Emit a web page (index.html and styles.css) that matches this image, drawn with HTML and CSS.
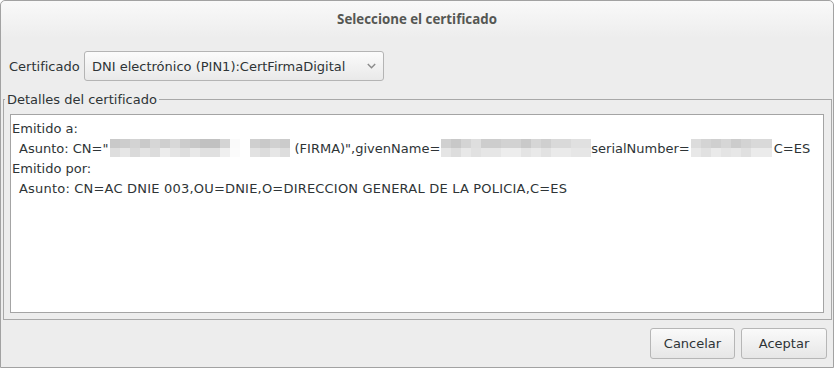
FILE: index.html
```html
<!DOCTYPE html>
<html lang="es">
<head>
    <meta charset="utf-8">
    <title>Seleccione el certificado</title>
    <link rel="stylesheet" href="styles.css">
</head>
<body>
    <div class="window">
        <div class="titlebar">Seleccione el certificado</div>

        <div class="cert-row">
            <label class="cert-label">Certificado</label>
            <div class="combo">
                <span>DNI electrónico (PIN1):CertFirmaDigital</span>
                <svg class="chevron" width="9" height="6" viewBox="0 0 9 6">
                    <path d="M0.8 1 L4.5 4.7 L8.2 1" fill="none" stroke="#8a8a8a" stroke-width="1.4"/>
                </svg>
            </div>
        </div>

        <fieldset class="details">
            <legend>Detalles del certificado</legend>
            <div class="details-box">
                <div class="line">Emitido a:</div>
                <div class="line indent">Asunto: CN="<span class="blur blur-name"></span><span class="blur blur-surname"></span> (FIRMA)",givenName=<span class="blur blur-given"></span>serialNumber=<span class="blur blur-serial"></span>C=ES</div>
                <div class="line">Emitido por:</div>
                <div class="line indent issuer">Asunto: CN=AC DNIE 003,OU=DNIE,O=DIRECCION GENERAL DE LA POLICIA,C=ES</div>
            </div>
        </fieldset>

        <div class="actions">
            <button class="btn btn-cancel">Cancelar</button>
            <button class="btn btn-ok">Aceptar</button>
        </div>
    </div>
</body>
</html>
```

FILE: styles.css
```css
body {
    margin: 0;
    font-family: "DejaVu Sans", sans-serif;
    font-size: 13px;
    color: #2e3436;
}
.window {
    width: 834px;
    height: 368px;
    box-sizing: border-box;
    border: 1px solid #a2a2a2;
    border-radius: 5px 5px 0 0;
    background: #ededed;
    display: flex;
    flex-direction: column;
}
.titlebar {
    height: 37px;
    line-height: 36px;
    text-align: center;
    font-family: "Open Sans", "Noto Sans", sans-serif;
    font-size: 13.3px;
    font-weight: bold;
    color: #555753;
    background: linear-gradient(#f9f9f9, #ededed);
    border-radius: 5px 5px 0 0;
}
.cert-row {
    display: flex;
    align-items: center;
    padding: 13px 0 0 8px;
}
.cert-label {
    width: 75px;
}
.combo {
    width: 300px;
    height: 30px;
    box-sizing: border-box;
    border: 1px solid #b4b4b4;
    border-radius: 3px;
    background: linear-gradient(#fbfbfb, #e9e9e9);
    display: flex;
    align-items: center;
    justify-content: space-between;
    padding: 0 7px;
}
.details {
    margin: 11px 1px 0 2px;
    padding: 7px 7px 6px 6px;
    border: 1px solid #a8a8a8;
}
.details legend {
    padding: 0 2px;
    margin-left: -5px;
    line-height: 15px;
}
.details-box {
    height: 199px;
    box-sizing: border-box;
    background: #fff;
    border: 1px solid #a4a4a4;
    padding: 4px 0 0 1px;
}
.line {
    height: 20px;
    line-height: 20px;
    white-space: nowrap;
}
.indent {
    padding-left: 7px;
}
.issuer {
    letter-spacing: 0.2px;
}
.blur {
    display: inline-block;
    height: 18px;
    vertical-align: top;
    background-repeat: no-repeat;
    background-size: 100% 50%;
    background-position: top, bottom;
}
.blur-name {
    width: 130px;
    margin-left: 2px;
    background-image:
        linear-gradient(to right, #c9c9c9 0 10px, #cdcdcd 10px 20px, #d3d3d3 20px 30px, #cacaca 30px 40px, #d6d6d6 40px 50px, #cfcfcf 50px 60px, #d8d8d8 60px 70px, #cccccc 70px 80px, #c8c8c8 80px 90px, #c1c1c1 90px 110px, #d4d4d4 110px 120px, #fafafa 120px 130px),
        linear-gradient(to right, #dedede 0 10px, #e6e6e6 10px 20px, #dadada 20px 30px, #e3e3e3 30px 40px, #dcdcdc 40px 50px, #ececec 50px 60px, #e4e4e4 60px 70px, #dedede 70px 80px, #e8e8e8 80px 90px, #e0e0e0 90px 110px, #efefef 110px 120px, #fbfbfb 120px 130px);
}
.blur-surname {
    width: 40px;
    margin-left: 10px;
    background-image:
        linear-gradient(to right, #cfcfcf 0 10px, #c9c9c9 10px 20px, #d1d1d1 20px 30px, #cbcbcb 30px 40px),
        linear-gradient(to right, #e2e2e2 0 10px, #dcdcdc 10px 20px, #e6e6e6 20px 30px, #dddddd 30px 40px);
}
.blur-given {
    width: 150px;
    margin-left: 1px;
    background-image:
        linear-gradient(to right, #d0d0d0 0 10px, #c8c8c8 10px 20px, #d4d4d4 20px 30px, #dedede 30px 40px, #cdcdcd 40px 60px, #d2d2d2 60px 80px, #c9c9c9 80px 90px, #d6d6d6 90px 100px, #cfcfcf 100px 110px, #d9d9d9 110px 130px, #e0e0e0 130px 150px),
        linear-gradient(to right, #e5e5e5 0 10px, #dddddd 10px 20px, #e8e8e8 20px 30px, #e1e1e1 30px 40px, #e6e6e6 40px 60px, #ededed 60px 80px, #e4e4e4 80px 90px, #e9e9e9 90px 100px, #e2e2e2 100px 110px, #eaeaea 110px 130px, #e6e6e6 130px 150px);
}
.blur-serial {
    width: 81px;
    margin: 0 2px 0 1px;
    background-image:
        linear-gradient(to right, #dcdcdc 0 10px, #d4d4d4 10px 20px, #cfcfcf 20px 30px, #d6d6d6 30px 40px, #cccccc 40px 50px, #d3d3d3 50px 60px, #d9d9d9 60px 81px),
        linear-gradient(to right, #e8e8e8 0 10px, #e1e1e1 10px 20px, #eaeaea 20px 30px, #e4e4e4 30px 40px, #e7e7e7 40px 50px, #e0e0e0 50px 60px, #ebebeb 60px 81px);
}
.actions {
    display: flex;
    justify-content: flex-end;
    gap: 6px;
    padding: 8px 6px 0 0;
}
.btn {
    height: 31px;
    box-sizing: border-box;
    border: 1px solid #b6b6b6;
    border-radius: 3px;
    background: linear-gradient(#fafafa, #e6e6e6);
    font-family: "DejaVu Sans", sans-serif;
    font-size: 13px;
    color: #2e3436;
    padding: 0;
}
.btn-cancel {
    width: 85px;
}
.btn-ok {
    width: 86px;
}
```
